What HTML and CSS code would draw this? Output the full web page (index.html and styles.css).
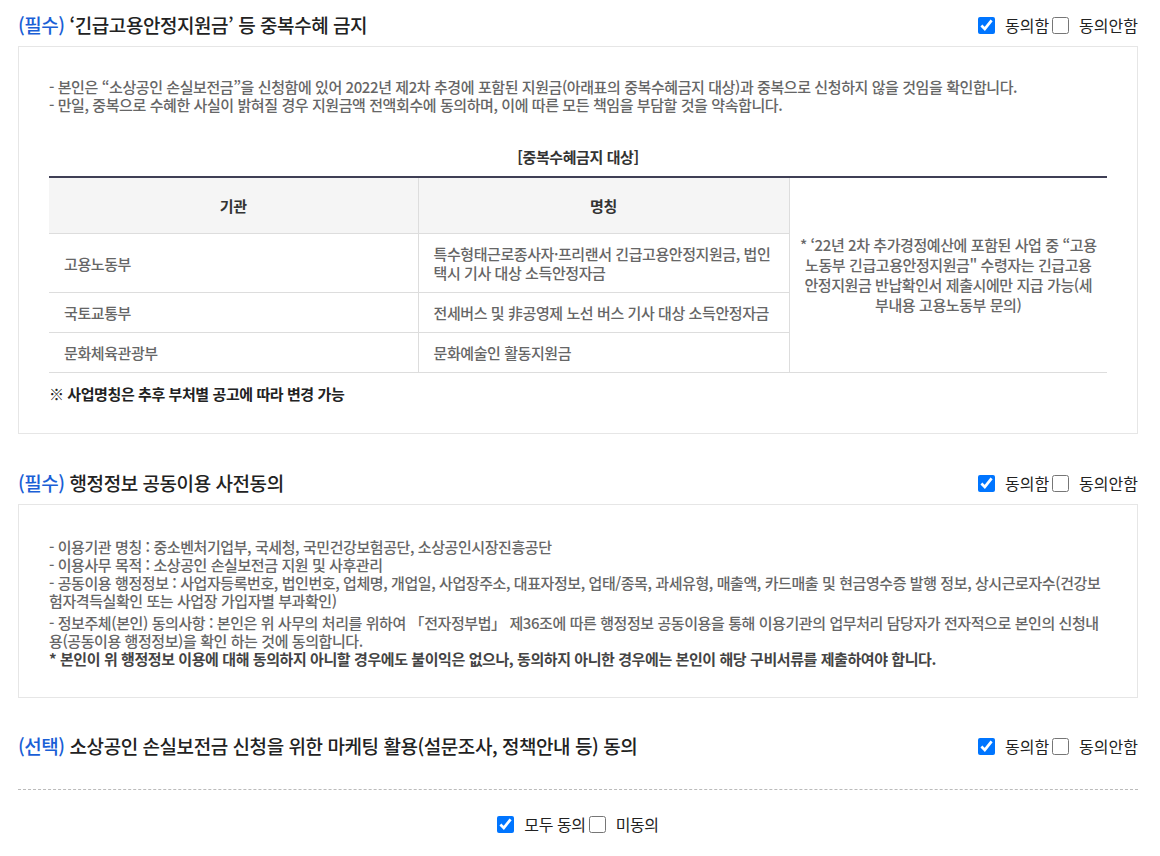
FILE: index.html
```html
<!DOCTYPE html>
<html lang="ko">
<head>
<meta charset="utf-8">
<title>약관 동의</title>
<link rel="stylesheet" href="styles.css">
</head>
<body>
<div class="wrap">
  <section class="sec">
    <div class="sec-head">
      <h3 class="sec-title"><span class="tag">(필수)</span> ‘긴급고용안정지원금’ 등 중복수혜 금지</h3>
      <div class="agree">
        <input type="checkbox" id="s1y" checked><label for="s1y">동의함</label>
        <input type="checkbox" id="s1n"><label for="s1n">동의안함</label>
      </div>
    </div>
    <div class="box box1">
      <div class="desc">
        <p>- 본인은 “소상공인 손실보전금”을 신청함에 있어 2022년 제2차 추경에 포함된 지원금(아래표의 중복수혜금지 대상)과 중복으로 신청하지 않을 것임을 확인합니다.</p>
        <p>- 만일, 중복으로 수혜한 사실이 밝혀질 경우 지원금액 전액회수에 동의하며, 이에 따른 모든 책임을 부담할 것을 약속합니다.</p>
      </div>
      <p class="tbl-cap">[중복수혜금지 대상]</p>
      <table class="tbl">
        <colgroup><col class="c1"><col class="c2"><col class="c3"></colgroup>
        <tr>
          <th>기관</th>
          <th>명칭</th>
          <td class="note-cell" rowspan="4">* ‘22년 2차 추가경정예산에 포함된 사업 중 “고용노동부 긴급고용안정지원금" 수령자는 긴급고용안정지원금 반납확인서 제출시에만 지급 가능(세부내용 고용노동부 문의)</td>
        </tr>
        <tr>
          <td>고용노동부</td>
          <td>특수형태근로종사자·프리랜서 긴급고용안정지원금, 법인 택시 기사 대상 소득안정자금</td>
        </tr>
        <tr>
          <td>국토교통부</td>
          <td>전세버스 및 非공영제 노선 버스 기사 대상 소득안정자금</td>
        </tr>
        <tr>
          <td>문화체육관광부</td>
          <td>문화예술인 활동지원금</td>
        </tr>
      </table>
      <p class="tbl-note">※ 사업명칭은 추후 부처별 공고에 따라 변경 가능</p>
    </div>
  </section>

  <section class="sec">
    <div class="sec-head">
      <h3 class="sec-title"><span class="tag">(필수)</span> 행정정보 공동이용 사전동의</h3>
      <div class="agree">
        <input type="checkbox" id="s2y" checked><label for="s2y">동의함</label>
        <input type="checkbox" id="s2n"><label for="s2n">동의안함</label>
      </div>
    </div>
    <div class="box box2">
      <div class="desc">
        <p>- 이용기관 명칭 : 중소벤처기업부, 국세청, 국민건강보험공단, 소상공인시장진흥공단</p>
        <p>- 이용사무 목적 : 소상공인 손실보전금 지원 및 사후관리</p>
        <p>- 공동이용 행정정보 : 사업자등록번호, 법인번호, 업체명, 개업일, 사업장주소, 대표자정보, 업태/종목, 과세유형, 매출액, 카드매출 및 현금영수증 발행 정보, 상시근로자수(건강보험자격득실확인 또는 사업장 가입자별 부과확인)</p>
        <p class="gap">- 정보주체(본인) 동의사항 : 본인은 위 사무의 처리를 위하여 「전자정부법」 제36조에 따른 행정정보 공동이용을 통해 이용기관의 업무처리 담당자가 전자적으로 본인의 신청내용(공동이용 행정정보)을 확인 하는 것에 동의합니다.</p>
        <p class="strong">* 본인이 위 행정정보 이용에 대해 동의하지 아니할 경우에도 불이익은 없으나, 동의하지 아니한 경우에는 본인이 해당 구비서류를 제출하여야 합니다.</p>
      </div>
    </div>
  </section>

  <section class="sec">
    <div class="sec-head">
      <h3 class="sec-title"><span class="tag">(선택)</span> 소상공인 손실보전금 신청을 위한 마케팅 활용(설문조사, 정책안내 등) 동의</h3>
      <div class="agree">
        <input type="checkbox" id="s3y" checked><label for="s3y">동의함</label>
        <input type="checkbox" id="s3n"><label for="s3n">동의안함</label>
      </div>
    </div>
  </section>

  <div class="all-agree agree">
    <input type="checkbox" id="ally" checked><label for="ally">모두 동의</label>
    <input type="checkbox" id="alln"><label for="alln">미동의</label>
  </div>
</div>
</body>
</html>
```

FILE: styles.css
```css
* { box-sizing: border-box; }

body {
  margin: 0;
  background: #fff;
  color: #222;
  font-family: "Noto Sans CJK KR", "Noto Sans", sans-serif;
}

.wrap {
  width: 1120px;
  margin-left: 18px;
  padding-top: 10px;
}

.sec-head {
  display: flex;
  justify-content: space-between;
  align-items: center;
  height: 30px;
  margin-bottom: 6px;
}

.sec-title {
  margin: 0;
  font-size: 19px;
  font-weight: 500;
  line-height: 30px;
  letter-spacing: -0.45px;
  color: #222;
}

.tag { color: #1a5fd6; }

.agree {
  display: flex;
  align-items: center;
}

.agree input {
  width: 17px;
  height: 17px;
  margin: 0;
}

.agree label {
  font-size: 16px;
  line-height: 20px;
  letter-spacing: 0;
  color: #222;
  margin-left: 10px;
  margin-right: 3px;
}

.agree label:last-child { margin-right: 0; }

.all-agree label { letter-spacing: -0.4px; }

.box {
  border: 1px solid #e6e6e6;
  padding: 31px 30px 30px;
  margin-bottom: 34px;
}

.box2 {
  padding: 33px 30px 29px;
  margin-bottom: 33px;
}

.desc p {
  margin: 0;
  font-size: 15px;
  font-weight: 500;
  line-height: 18px;
  letter-spacing: -0.42px;
  color: #666;
}

.desc p.gap { margin-top: 4px; }

.desc p.strong {
  font-weight: 700;
  color: #444;
}

.tbl-cap {
  margin: 34px 0 10px;
  text-align: center;
  font-size: 15px;
  font-weight: 700;
  line-height: 18px;
  letter-spacing: -0.42px;
  color: #333;
}

.tbl {
  width: 100%;
  table-layout: fixed;
  border-collapse: collapse;
  border-top: 2px solid #3f3f55;
  font-size: 15px;
  letter-spacing: -0.42px;
}

.tbl .c1 { width: 369px; }
.tbl .c2 { width: 371px; }
.tbl .c3 { width: 318px; }

.tbl th {
  padding: 18px 10px;
  background: #f5f5f5;
  font-weight: 700;
  line-height: 19px;
  color: #333;
  border-bottom: 1px solid #ddd;
  border-right: 1px solid #ddd;
}

.tbl td {
  padding: 10px 10px 10px 15px;
  font-weight: 500;
  line-height: 19px;
  color: #666;
  text-align: left;
  border-bottom: 1px solid #ddd;
  border-right: 1px solid #ddd;
}

.tbl td.note-cell {
  border-right: 0;
  padding: 0 10px;
  text-align: center;
  vertical-align: middle;
  line-height: 20px;
}

.tbl-note {
  margin: 12px 0 0;
  font-size: 15px;
  font-weight: 700;
  line-height: 18px;
  letter-spacing: -0.42px;
  color: #222;
}

.all-agree {
  justify-content: center;
  height: 30px;
  margin-top: 28px;
  padding-top: 19px;
  border-top: 1px dashed #bbb;
  box-sizing: content-box;
}
```
